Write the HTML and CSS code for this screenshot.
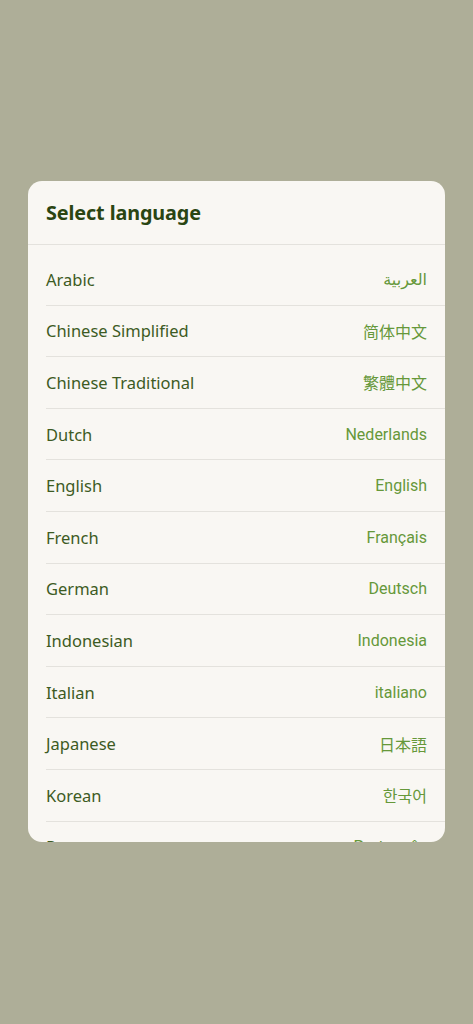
FILE: index.html
```html
<!DOCTYPE html>
<html lang="en">
<head>
<meta charset="utf-8">
<title>Select language</title>
<link rel="stylesheet" href="styles.css">
</head>
<body>
<div class="screen">
  <div class="dialog">
    <div class="dialog-header">Select language</div>
    <ul class="lang-list">
      <li class="lang-row"><span class="lang-en">Arabic</span><span class="lang-native arabic" lang="ar">العربية</span></li>
      <li class="lang-row"><span class="lang-en">Chinese Simplified</span><span class="lang-native cjk-sc" lang="zh-Hans">简体中文</span></li>
      <li class="lang-row"><span class="lang-en">Chinese Traditional</span><span class="lang-native cjk-tc" lang="zh-Hant">繁體中文</span></li>
      <li class="lang-row"><span class="lang-en">Dutch</span><span class="lang-native">Nederlands</span></li>
      <li class="lang-row"><span class="lang-en">English</span><span class="lang-native">English</span></li>
      <li class="lang-row"><span class="lang-en">French</span><span class="lang-native">Français</span></li>
      <li class="lang-row"><span class="lang-en">German</span><span class="lang-native">Deutsch</span></li>
      <li class="lang-row"><span class="lang-en">Indonesian</span><span class="lang-native">Indonesia</span></li>
      <li class="lang-row"><span class="lang-en">Italian</span><span class="lang-native">italiano</span></li>
      <li class="lang-row"><span class="lang-en">Japanese</span><span class="lang-native cjk-jp" lang="ja">日本語</span></li>
      <li class="lang-row"><span class="lang-en">Korean</span><span class="lang-native cjk-kr" lang="ko">한국어</span></li>
      <li class="lang-row"><span class="lang-en">Portuguese</span><span class="lang-native">Português</span></li>
    </ul>
  </div>
</div>
</body>
</html>
```

FILE: styles.css
```css
* { box-sizing: border-box; }
html, body {
  margin: 0;
  padding: 0;
  height: 100%;
}
body {
  background: #aeae98;
  font-family: "Noto Sans", "Open Sans", sans-serif;
}
.screen {
  padding: 181px 28px 0 28px;
}
.dialog {
  background: #f9f7f3;
  border-radius: 14px;
  height: 661px;
  overflow: hidden;
}
.dialog-header {
  height: 64px;
  padding: 18px 18px 0 18px;
  font-size: 19.8px;
  font-weight: 700;
  color: #2a4512;
  border-bottom: 1px solid #e4e2dd;
  letter-spacing: -0.1px;
}
.lang-list {
  list-style: none;
  margin: 0;
  padding: 9px 0 0 18px;
}
.lang-row {
  display: flex;
  justify-content: space-between;
  align-items: center;
  height: 51.6px;
  padding-right: 18px;
  border-bottom: 1px solid #e4e2dd;
  font-size: 16.5px;
}
.lang-en {
  color: #3d5b23;
}
.lang-native {
  color: #66983a;
  font-family: Roboto, "Noto Sans", sans-serif;
  font-size: 16px;
}
.arabic { font-family: "Noto Sans", "DejaVu Sans", sans-serif; font-size: 16px; }
.cjk-sc, .cjk-tc, .cjk-jp, .cjk-kr { font-size: 16px; font-weight: 400; }
.cjk-sc { font-family: "Noto Sans CJK SC", sans-serif; }
.cjk-tc { font-family: "Noto Sans CJK TC", sans-serif; }
.cjk-jp { font-family: "Noto Sans CJK JP", sans-serif; }
.cjk-kr { font-family: "Noto Sans CJK KR", sans-serif; }
```
